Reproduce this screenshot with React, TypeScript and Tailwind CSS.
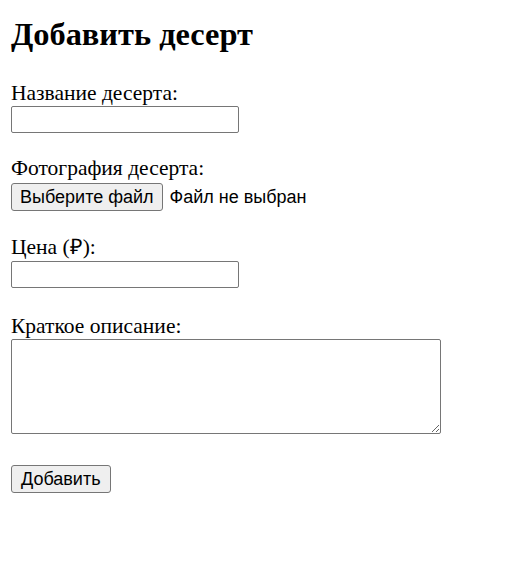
const fieldLabel = "block h-[23px] text-[21.5px] leading-[23px]";
const textInput =
  "block w-[228px] h-[27px] border border-[#767676] rounded-[2px] bg-white px-[3px] text-[18px] font-['Liberation_Sans',sans-serif] outline-none";
const grayButton =
  "h-[28px] border border-[#767676] rounded-[3px] bg-[#efefef] text-[18px] leading-[26px] font-['Liberation_Sans',sans-serif] text-black";

export default function App() {
  return (
    <div className="min-h-[563px] bg-white pl-[11px] font-['Liberation_Serif',serif] text-black">
      <h2 className="pt-[17px] text-[32.4px] font-bold leading-[34px]">Добавить десерт</h2>

      <form className="flex flex-col items-start" onSubmit={(e) => e.preventDefault()}>
        <label className={`${fieldLabel} mt-[31px]`}>Название десерта:</label>
        <input type="text" className={`${textInput} mt-[1px]`} />

        <label className={`${fieldLabel} mt-[24px]`}>Фотография десерта:</label>
        <div className="mt-[3px] flex items-center gap-[7px]">
          <button type="button" className={`${grayButton} px-[8px]`}>
            Выберите файл
          </button>
          <span className="text-[18px] font-['Liberation_Sans',sans-serif]">Файл не выбран</span>
        </div>

        <label className={`${fieldLabel} mt-[25px]`}>Цена (₽):</label>
        <input type="text" className={`${textInput} mt-[2px]`} />

        <label className={`${fieldLabel} mt-[27px]`}>Краткое описание:</label>
        <textarea className="mt-[1px] block h-[95px] w-[430px] border border-[#767676] rounded-[2px] bg-white px-[3px] text-[16.5px] font-['Liberation_Mono',monospace] outline-none" />

        <button type="submit" className={`${grayButton} mt-[31px] px-[9px]`}>
          Добавить
        </button>
      </form>
    </div>
  );
}
